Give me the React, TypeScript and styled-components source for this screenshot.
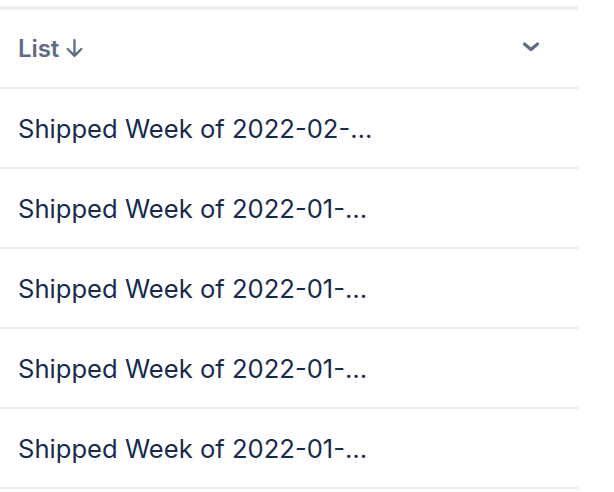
import React from "react";
import styled, { createGlobalStyle } from "styled-components";

const Global = createGlobalStyle`
  html, body { margin: 0; padding: 0; background: #ffffff; }
  body { font-family: Inter, "Noto Sans", "Liberation Sans", sans-serif; }
`;

const Page = styled.div`
  padding-top: 6px;
  width: 614px;
`;

const Table = styled.div`
  width: 578px;
  border-top: 4px solid #ebecf0;
  display: flex;
  flex-direction: column;
`;

const HeaderRow = styled.div`
  height: 77px;
  display: flex;
  align-items: center;
  justify-content: space-between;
  padding: 0 38px 0 18px;
  border-bottom: 2px solid #ebecf0;
`;

const HeaderLabel = styled.div`
  display: flex;
  align-items: center;
  gap: 5px;
  font-size: 24px;
  font-weight: 600;
  color: #5e6c84;
  letter-spacing: -0.1px;
`;

const ChevronWrap = styled.div`
  display: flex;
  margin-bottom: 4px;
`;

const Row = styled.div`
  height: 78px;
  display: flex;
  align-items: center;
  padding: 0 18px;
  border-bottom: 2px solid #ebecf0;
`;

const Cell = styled.div`
  font-size: 25.6px;
  color: #172b4d;
  white-space: nowrap;
  overflow: hidden;
  text-overflow: ellipsis;
  max-width: 380px;
`;

const Arrow = () => (
  <svg width="21" height="21" viewBox="0 0 20 20" fill="none">
    <path d="M10 2v14.5M3.5 10.5l6.5 6.5 6.5-6.5" stroke="#5e6c84" strokeWidth="2.2" strokeLinecap="round" strokeLinejoin="round" />
  </svg>
);

const Chevron = () => (
  <svg width="18" height="18" viewBox="0 0 18 18" fill="none">
    <path d="M2.5 6l6.5 5.5 6.5-5.5" stroke="#5e6c84" strokeWidth="3.2" strokeLinecap="round" strokeLinejoin="round" />
  </svg>
);

const rows = [
  "Shipped Week of 2022-02-…",
  "Shipped Week of 2022-01-…",
  "Shipped Week of 2022-01-…",
  "Shipped Week of 2022-01-…",
  "Shipped Week of 2022-01-…",
];

export default function App() {
  return (
    <Page>
      <Global />
      <Table>
        <HeaderRow>
          <HeaderLabel>
            List
            <Arrow />
          </HeaderLabel>
          <ChevronWrap>
            <Chevron />
          </ChevronWrap>
        </HeaderRow>
        {rows.map((r, i) => (
          <Row key={i}>
            <Cell>{r}</Cell>
          </Row>
        ))}
      </Table>
    </Page>
  );
}
